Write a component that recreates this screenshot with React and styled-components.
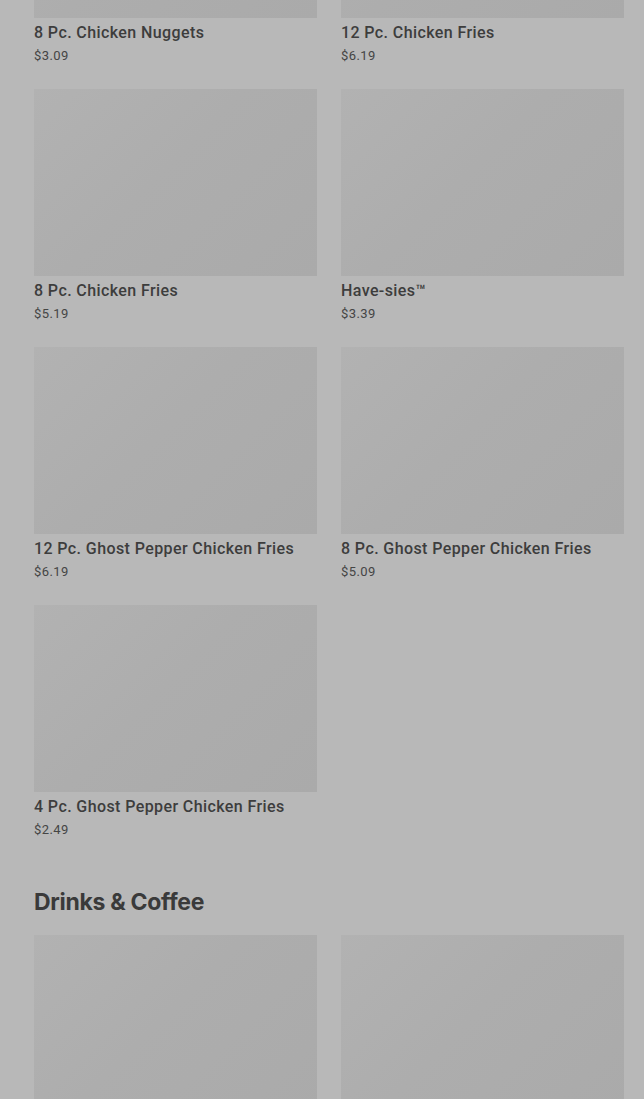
import React from "react";
import styled, { createGlobalStyle } from "styled-components";

const GlobalStyle = createGlobalStyle`
  html, body {
    margin: 0;
    padding: 0;
    background: #b8b8b8;
    overflow: hidden;
  }
`;

const Page = styled.div`
  padding: 0 20px 0 34px;
  margin-top: -169px;
  font-family: Roboto, "Noto Sans", sans-serif;
  color: #3b3b3b;
`;

const Grid = styled.div`
  display: grid;
  grid-template-columns: 283px 283px;
  column-gap: 24px;
  row-gap: 24px;
`;

const Card = styled.div`
  display: flex;
  flex-direction: column;
`;

const Thumb = styled.div`
  height: 187px;
  background: linear-gradient(135deg, #b2b2b2 0%, #adadad 45%, #aaaaaa 100%);
`;

const Name = styled.div`
  margin-top: 5px;
  font-size: 16px;
  line-height: 20px;
  font-weight: 500;
  letter-spacing: 0.4px;
  white-space: nowrap;
  color: #3d3d3d;
`;

const Price = styled.div`
  margin-top: 3px;
  font-size: 13px;
  line-height: 19px;
  letter-spacing: 0.4px;
  color: #454545;
`;

const Heading = styled.h2`
  margin: 47px 0 17px;
  font-family: Inter, "Noto Sans", sans-serif;
  font-size: 23px;
  line-height: 32px;
  font-weight: 700;
  letter-spacing: -0.3px;
  color: #3a3a3a;
`;

const items = [
  ["8 Pc. Chicken Nuggets", "$3.09"],
  ["12 Pc. Chicken Fries", "$6.19"],
  ["8 Pc. Chicken Fries", "$5.19"],
  ["Have-sies™", "$3.39"],
  ["12 Pc. Ghost Pepper Chicken Fries", "$6.19"],
  ["8 Pc. Ghost Pepper Chicken Fries", "$5.09"],
  ["4 Pc. Ghost Pepper Chicken Fries", "$2.49"],
];

const drinks = [0, 1];

const App = () => (
  <>
    <GlobalStyle />
    <Page>
      <Grid>
        {items.map(([name, price]) => (
          <Card key={name}>
            <Thumb />
            <Name>{name}</Name>
            <Price>{price}</Price>
          </Card>
        ))}
      </Grid>
      <Heading>Drinks &amp; Coffee</Heading>
      <Grid>
        {drinks.map((i) => (
          <Card key={i}>
            <Thumb />
          </Card>
        ))}
      </Grid>
    </Page>
  </>
);

export default App;
